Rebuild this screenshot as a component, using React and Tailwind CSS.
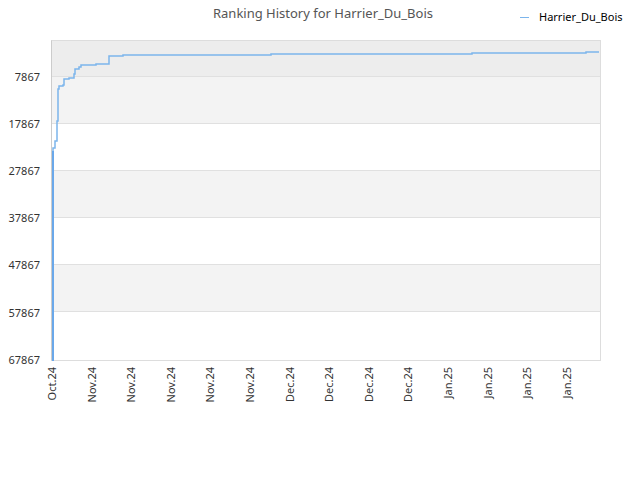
const yLabels = ["7867", "17867", "27867", "37867", "47867", "57867", "67867"];
const xLabels = ["Oct.24", "Nov.24", "Nov.24", "Nov.24", "Nov.24", "Nov.24", "Dec.24", "Dec.24", "Dec.24", "Dec.24", "Jan.25", "Jan.25", "Jan.25", "Jan.25"];

// points in page pixels, shifted into plot space below
const pts = [
  [52, 360], [52, 147], [54, 140], [56, 132], [56, 120], [57, 88], [58, 85], [62, 84], [63, 78], [68, 77],
  [73, 73], [74, 68], [78, 66], [80, 64], [95, 63], [107, 63], [108, 55], [121, 55], [122, 54],
  [268, 54], [270, 53], [470, 53], [471, 52], [584, 52], [585, 51], [598, 51],
];

const App = () => {
  const line = pts.map(([x, y], i) => {
    const px = x - 51, py = y - 40;
    if (i === 0) return `M${px},${py}`;
    return `H${px} V${py}`;
  }).join(" ");

  return (
    <div className="w-[640px] h-[480px] bg-white relative [font-family:'DejaVu_Sans',sans-serif]">
      {/* Title + legend */}
      <div className="h-[40px] flex">
        <div className="flex-1 pt-[4px] pl-[6px] text-center text-[13px] text-[#555]">Ranking History for Harrier_Du_Bois</div>
        <div className="absolute left-[520px] top-[9px] flex items-center gap-[10px] text-[11px] text-black">
          <span className="w-[9px] h-[1px] bg-[#7cb5ec]"></span>
          <span>Harrier_Du_Bois</span>
        </div>
      </div>

      <div className="flex">
        {/* Y axis */}
        <div className="w-[51px] h-[320px] pt-[37px] pr-[11px] text-[11px] text-[#333]">
          <div className="h-[283px] flex flex-col justify-between items-end">
            {yLabels.map((l, i) => (
              <div key={i} className="h-0 flex items-center">{l}</div>
            ))}
          </div>
        </div>

        {/* Plot */}
        <div className="relative w-[550px] h-[321px] border border-[#dddddd] border-l-[#ccc] flex flex-col">
          <div className="h-[36px] bg-[#ededed] border-b border-[#e0e0e0]"></div>
          <div className="h-[47px] bg-[#f3f3f3] border-b border-[#e0e0e0]"></div>
          <div className="h-[47px] bg-white border-b border-[#e0e0e0]"></div>
          <div className="h-[47px] bg-[#f3f3f3] border-b border-[#e0e0e0]"></div>
          <div className="h-[47px] bg-white border-b border-[#e0e0e0]"></div>
          <div className="h-[47px] bg-[#f3f3f3] border-b border-[#e0e0e0]"></div>
          <div className="flex-1 bg-white"></div>
          <svg className="absolute left-0 top-0" width="549" height="320" viewBox="0 0 549 320">
            <path d={line} fill="none" stroke="#7cb5ec" strokeWidth="1.5" />
            <line x1="1" y1="320" x2="1" y2="110" stroke="#6aa8ea" strokeWidth="2" />
          </svg>
        </div>
      </div>

      {/* X axis */}
      <div className="flex pl-[44px] pt-[6px] text-[11px] text-[#333]">
        {xLabels.map((l, i) => (
          <div key={i} className="w-[39.6px] shrink-0">
            <div className="[writing-mode:vertical-rl] rotate-180">{l}</div>
          </div>
        ))}
      </div>
    </div>
  );
};

export default App;
